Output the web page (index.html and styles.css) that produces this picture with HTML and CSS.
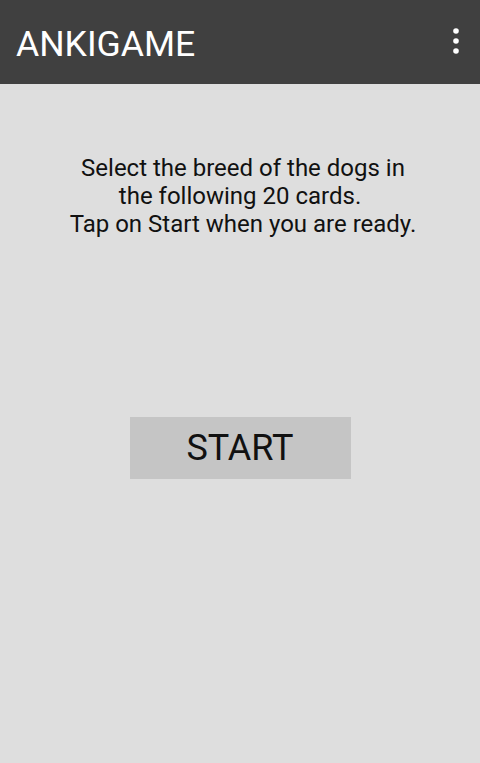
FILE: index.html
```html
<!DOCTYPE html>
<html>
<head>
<meta charset="utf-8">
<link rel="stylesheet" href="styles.css">
</head>
<body>
<header class="appbar">
  <h1 class="title">ANKIGAME</h1>
  <button class="overflow" aria-label="More options">
    <svg width="6" height="26" viewBox="0 0 6 26"><circle cx="3" cy="3" r="2.8" fill="#fff"/><circle cx="3" cy="13" r="2.8" fill="#fff"/><circle cx="3" cy="23" r="2.8" fill="#fff"/></svg>
  </button>
</header>
<main class="content">
  <p class="intro">Select the breed of the dogs in<br>the following 20 cards.&nbsp;<br>Tap on Start when you are ready.</p>
  <button class="start">START</button>
</main>
</body>
</html>
```
FILE: styles.css
```css
html, body {
  margin: 0;
  padding: 0;
  height: 100%;
}
body {
  background: #dedede;
  font-family: Roboto, "Noto Sans", sans-serif;
  display: flex;
  flex-direction: column;
}
.appbar {
  height: 84px;
  flex: none;
  background: #404040;
  display: flex;
  align-items: center;
  justify-content: space-between;
  padding: 0 21px 0 16px;
}
.title {
  margin: 0;
  padding-top: 3px;
  color: #fff;
  font-weight: 400;
  font-size: 35.6px;
  letter-spacing: 0;
}
.overflow {
  background: none;
  border: 0;
  padding: 0;
  display: flex;
  margin-bottom: 2px;
}
.content {
  flex: 1;
  display: flex;
  flex-direction: column;
  align-items: center;
  padding-top: 70px;
}
.intro {
  margin: 0;
  padding-left: 6px;
  font-size: 24px;
  line-height: 28px;
  color: #111;
  text-align: center;
}
.start {
  margin-top: 179px;
  width: 221px;
  height: 62px;
  border: 0;
  background: #c5c5c5;
  font-family: Roboto, "Noto Sans", sans-serif;
  font-size: 36px;
  color: #111;
  padding: 0;
}
```
